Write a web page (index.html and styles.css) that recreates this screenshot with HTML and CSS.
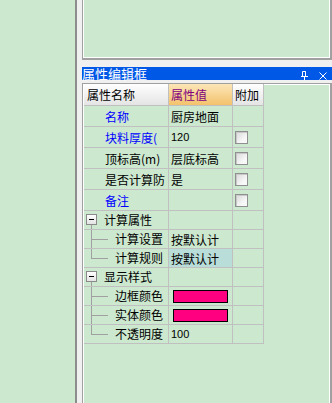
FILE: index.html
```html
<!DOCTYPE html>
<html lang="zh-CN">
<head>
<meta charset="utf-8">
<title>属性编辑框</title>
<link rel="stylesheet" href="styles.css">
</head>
<body>
<div class="app">
  <div class="left"></div>
  <div class="splitter"></div>
  <div class="right">
    <div class="top-panel"></div>
    <div class="titlebar">
      <span class="title">属性编辑框</span>
      <span class="tb-icons">
        <svg class="pin" width="7" height="9" viewBox="0 0 7 9"><path d="M1.5 0.5h3v5h-3z M4.5 0.5v5" fill="none" stroke="#fff" stroke-width="1"/><path d="M0 5.5h7 M3.5 6v3" stroke="#fff" stroke-width="1"/></svg>
        <svg class="close" width="8" height="8" viewBox="0 0 8 8"><path d="M0.5 0.5L7.5 7.5M7.5 0.5L0.5 7.5" stroke="#fff" stroke-width="1"/></svg>
      </span>
    </div>
    <div class="prop-panel">
      <div class="grid">
        <div class="row head">
          <div class="c1 hcell">属性名称</div>
          <div class="c2 hcell val-head">属性值</div>
          <div class="c3 hcell">附加</div>
        </div>
        <div class="row tall">
          <div class="c1 name blue">名称</div>
          <div class="c2">厨房地面</div>
          <div class="c3"></div>
        </div>
        <div class="row tall">
          <div class="c1 name blue">块料厚度(</div>
          <div class="c2 num">120</div>
          <div class="c3"><span class="chk"></span></div>
        </div>
        <div class="row tall">
          <div class="c1 name">顶标高(m)</div>
          <div class="c2">层底标高</div>
          <div class="c3"><span class="chk"></span></div>
        </div>
        <div class="row tall">
          <div class="c1 name">是否计算防</div>
          <div class="c2">是</div>
          <div class="c3"><span class="chk"></span></div>
        </div>
        <div class="row tall">
          <div class="c1 name blue">备注</div>
          <div class="c2"></div>
          <div class="c3"><span class="chk"></span></div>
        </div>
        <div class="row">
          <div class="c1 group"><span class="gutter open"><span class="minus"></span></span>计算属性</div>
          <div class="c2"></div>
          <div class="c3"></div>
        </div>
        <div class="row">
          <div class="c1 child"><span class="gutter branch"></span>计算设置</div>
          <div class="c2">按默认计</div>
          <div class="c3"></div>
        </div>
        <div class="row">
          <div class="c1 child"><span class="gutter branch last"></span>计算规则</div>
          <div class="c2 selected">按默认计</div>
          <div class="c3"></div>
        </div>
        <div class="row">
          <div class="c1 group"><span class="gutter open"><span class="minus"></span></span>显示样式</div>
          <div class="c2"></div>
          <div class="c3"></div>
        </div>
        <div class="row">
          <div class="c1 child"><span class="gutter branch"></span>边框颜色</div>
          <div class="c2"><span class="swatch"></span></div>
          <div class="c3"></div>
        </div>
        <div class="row">
          <div class="c1 child"><span class="gutter branch"></span>实体颜色</div>
          <div class="c2"><span class="swatch"></span></div>
          <div class="c3"></div>
        </div>
        <div class="row">
          <div class="c1 child"><span class="gutter branch last"></span>不透明度</div>
          <div class="c2 num">100</div>
          <div class="c3"></div>
        </div>
      </div>
    </div>
  </div>
</div>
</body>
</html>
```

FILE: styles.css
```css
html, body {
  margin: 0;
  padding: 0;
}
body {
  width: 332px;
  height: 403px;
  overflow: hidden;
  font-family: "Noto Sans CJK SC", "Noto Sans", sans-serif;
  font-size: 12px;
  color: #000;
}
.app {
  display: flex;
  height: 403px;
  background: #f0f0f0;
}
.left {
  width: 75px;
  background: #cce8cf;
}
.splitter {
  width: 7px;
  box-sizing: border-box;
  border-left: 2px solid #8c8c8c;
  background: #f0f0f0;
}
.right {
  width: 250px;
  display: flex;
  flex-direction: column;
}
.top-panel {
  height: 60px;
  box-sizing: border-box;
  background: #cce8cf;
  border-left: 1px solid #a0a0a0;
  border-right: 2px solid #a0a0a0;
  border-bottom: 2px solid #a0a0a0;
  box-shadow: inset 1px 0 #fff, inset -1px -1px #fff;
}
.titlebar {
  margin-top: 7px;
  height: 13px;
  background: #0058e6;
  color: #fff;
  display: flex;
  align-items: center;
  justify-content: space-between;
}
.title {
  font-size: 13px;
  line-height: 13px;
}
.tb-icons {
  display: flex;
  align-items: flex-start;
  gap: 11px;
  padding-right: 5px;
  height: 13px;
}
.pin {
  margin-top: 4px;
}
.close {
  margin-top: 5px;
}
.prop-panel {
  margin-top: 3px;
  flex: 1;
  box-sizing: border-box;
  background: #cce8cf;
  border-left: 1px solid #a0a0a0;
  border-top: 1px solid #a0a0a0;
  border-right: 2px solid #a0a0a0;
  box-shadow: inset 1px 1px #fff, inset -1px 0 #fff;
  padding: 0 0 0 1px;
}
.grid {
  display: flex;
  flex-direction: column;
  width: 180px;
}
.row {
  display: flex;
  height: 19px;
}
.row.tall {
  height: 21px;
}
.row.head {
  height: 22px;
}
.row > div {
  box-sizing: border-box;
  border-right: 1px solid #c0c0c0;
  border-bottom: 1px solid #c0c0c0;
  display: flex;
  align-items: center;
  white-space: nowrap;
  overflow: hidden;
}
.c1 {
  width: 85px;
}
.c2 {
  width: 64px;
  padding-left: 2px;
}
.c3 {
  width: 31px;
  padding-left: 2px;
}
.hcell {
  background: linear-gradient(#ffffff, #e4e4e4);
}
.row.head .c1 {
  padding-left: 3px;
}
.val-head {
  background: linear-gradient(#fce6b8, #f3c26c);
  color: #800080;
}
.name {
  padding-left: 21px;
}
.blue {
  color: #0000ff;
}
.num {
  font-family: "Liberation Sans", Arial, sans-serif;
  font-size: 11px;
}
.chk {
  width: 11px;
  height: 11px;
  border: 1px solid #8e8f8f;
  background: linear-gradient(135deg, #d8d8d8, #f8f8f8 70%);
  box-shadow: inset 1px 1px #c8c8c8;
}
.selected {
  background: #b9ded9;
}
.swatch {
  width: 53px;
  height: 11px;
  border: 1px solid #000;
  background: #ff0080;
  margin-left: 2px;
}
.group, .child {
  align-items: stretch !important;
  line-height: 18px;
}
.gutter {
  display: inline-block;
  flex: none;
}
.group .gutter {
  width: 20px;
  background: linear-gradient(#a0a0a0, #a0a0a0) 7px 13px / 1px 100% no-repeat;
}
.minus {
  display: block;
  width: 9px;
  height: 9px;
  margin: 3px 0 0 2px;
  border: 1px solid #8a8a8a;
  background: linear-gradient(#000, #000) center / 5px 1px no-repeat, linear-gradient(#ffffff, #e4e4e4);
}
.child .gutter {
  width: 31px;
}
.branch {
  background:
    linear-gradient(#a0a0a0, #a0a0a0) 7px 0 / 1px 100% no-repeat,
    linear-gradient(#a0a0a0, #a0a0a0) 7px 9px / 17px 1px no-repeat;
}
.branch.last {
  background:
    linear-gradient(#a0a0a0, #a0a0a0) 7px 0 / 1px 10px no-repeat,
    linear-gradient(#a0a0a0, #a0a0a0) 7px 9px / 17px 1px no-repeat;
}
```
